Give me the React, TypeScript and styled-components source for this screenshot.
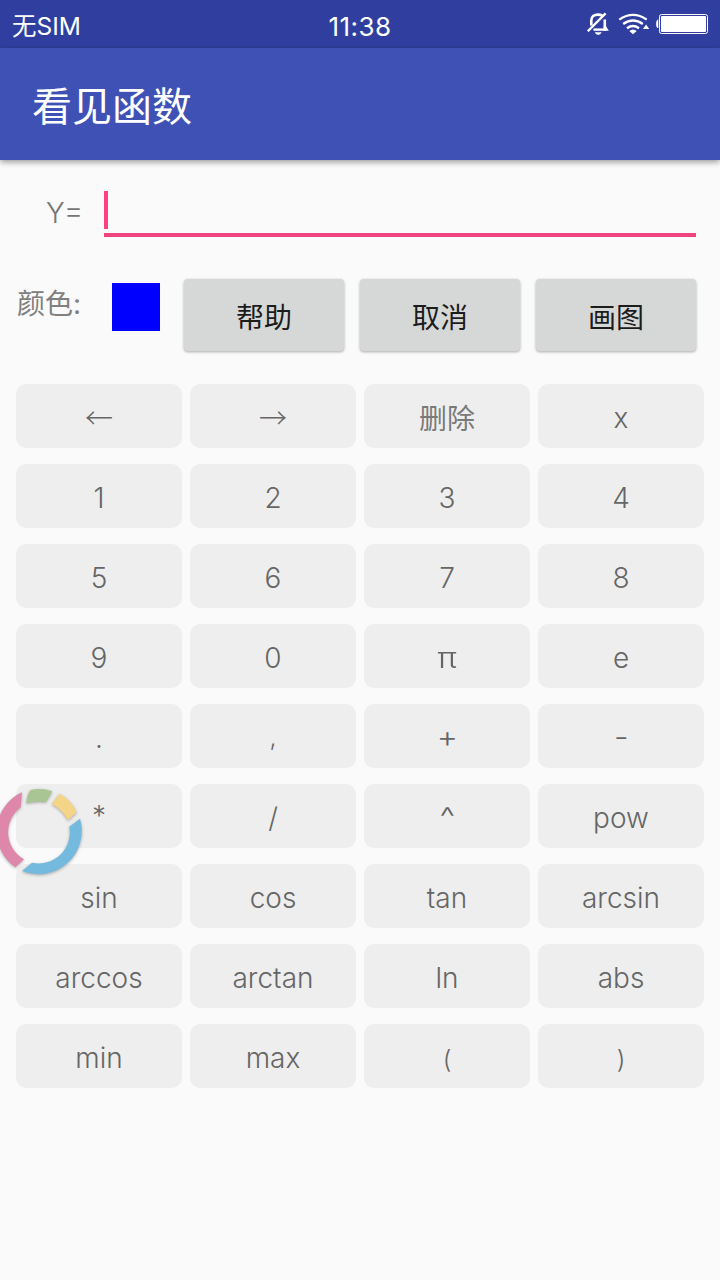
import React from "react";
import styled, { createGlobalStyle } from "styled-components";

const GlobalStyle = createGlobalStyle`
  * { box-sizing: border-box; }
  body {
    margin: 0;
    background: #fafafa;
    font-family: Inter, "Noto Sans CJK SC", sans-serif;
  }
`;

const Screen = styled.main`
  position: relative;
  width: 720px;
  height: 1280px;
  overflow: hidden;
  background: #fafafa;
`;

const StatusBar = styled.header`
  display: grid;
  grid-template-columns: 1fr auto 1fr;
  align-items: center;
  height: 48px;
  padding: 2px 12px 0;
  background: #303f9f;
  color: #fff;
  line-height: 46px;
`;

const Carrier = styled.span`
  font-size: 24.5px;
`;

const Clock = styled.time`
  padding-top: 2px;
  font-size: 26px;
  letter-spacing: 0.4px;
`;

const StatusIcons = styled.svg`
  justify-self: end;
  align-self: start;
  margin: -2px -12px 0 0;
  display: block;
`;

const AppBar = styled.div`
  display: flex;
  align-items: center;
  height: 112px;
  padding: 5px 32px 0;
  background: #3f51b5;
  box-shadow: 0 2px 6px rgba(0, 0, 0, 0.4);
`;

const Title = styled.h1`
  margin: 0;
  color: #fff;
  font-size: 40px;
  font-weight: 400;
  line-height: 57px;
`;

const FormulaRow = styled.div`
  display: flex;
  height: 77px;
  padding: 31px 24px 0 0;
`;

const FormulaLabel = styled.label`
  width: 104px;
  padding-left: 46px;
  color: #757575;
  font-size: 28px;
  font-weight: 300;
  line-height: 42px;
  letter-spacing: -1px;
`;

const EqualsSign = styled.span`
  position: relative;
  top: -2px;
  font-size: 30px;
`;

const FormulaField = styled.div`
  flex: 1;
  height: 46px;
  border-bottom: 4px solid #f04480;
`;

const Caret = styled.div`
  width: 4px;
  height: 38px;
  background: #ff4081;
`;

const ActionRow = styled.div`
  display: flex;
  align-items: flex-start;
  height: 147px;
  padding: 42px 24px 0 17px;
`;

const ColorLabel = styled.span`
  width: 95px;
  padding-top: 1px;
  color: #808080;
  font-size: 28px;
  font-weight: 400;
  line-height: 48px;
`;

const Swatch = styled.div`
  width: 48px;
  height: 48px;
  margin: 4px 24px 0 0;
  background: #0000ff;
`;

const Actions = styled.div`
  display: flex;
  gap: 16px;
`;

const ActionButton = styled.button`
  width: 160px;
  height: 72px;
  padding: 6px 0 0;
  border: 0;
  border-radius: 4px;
  background: #d6d7d7;
  box-shadow: 0 1px 3px rgba(0, 0, 0, 0.32);
  color: #1c1c1c;
  font-family: inherit;
  font-size: 28px;
  line-height: 66px;
`;

const Keypad = styled.div`
  display: grid;
  grid-template-columns: repeat(4, 166px);
  grid-auto-rows: 64px;
  gap: 16px 8px;
  padding: 0 16px;
`;

const Key = styled.button`
  display: flex;
  justify-content: center;
  padding: 4px 0 0;
  border: 0;
  border-radius: 10px;
  background: #eeeeee;
  color: #666666;
  font-family: inherit;
  font-size: 28px;
  font-weight: 300;
  line-height: 60px;
`;

const Glyph = styled.span<{ $size?: number; $lift?: number; $weight?: number; $cjk?: boolean; $stretch?: number; $color?: string }>`
  color: ${(p) => p.$color ?? "inherit"};
  font-family: ${(p) => (p.$cjk ? '"Noto Sans CJK SC", sans-serif' : "inherit")};
  font-size: ${(p) => p.$size ?? 28}px;
  font-weight: ${(p) => p.$weight ?? 300};
  transform: translateY(${(p) => -(p.$lift ?? 0)}px) scaleX(${(p) => p.$stretch ?? 1});
`;

const FloatingRing = styled.svg`
  position: absolute;
  left: 0;
  top: 770px;
  filter: drop-shadow(0 1px 1.5px rgba(0, 0, 0, 0.3));
`;

type KeySpec = {
  label: string;
  size?: number;
  lift?: number;
  weight?: number;
  cjk?: boolean;
  stretch?: number;
  color?: string;
};

const special: Record<string, Omit<KeySpec, "label">> = {
  "←": { cjk: true, lift: 1 },
  "→": { cjk: true, lift: 1 },
  "删除": { cjk: true, weight: 400, lift: 1, color: "#7a7a7a" },
  "π": { stretch: 1.2 },
  ",": { size: 25, lift: 1 },
  "+": { size: 29, lift: 1, stretch: 1.12 },
  "-": { stretch: 1.15, lift: 1 },
  "*": { lift: 2 },
  "^": { stretch: 1.25, lift: 1 },
  "(": { size: 25, lift: -1 },
  ")": { size: 25, lift: -1 },
};

const keys: KeySpec[] = [
  "←", "→", "删除", "x",
  "1", "2", "3", "4",
  "5", "6", "7", "8",
  "9", "0", "π", "e",
  ".", ",", "+", "-",
  "*", "/", "^", "pow",
  "sin", "cos", "tan", "arcsin",
  "arccos", "arctan", "ln", "abs",
  "min", "max", "(", ")",
].map((label) => ({ label, ...special[label] }));

export default function App() {
  return (
    <Screen>
      <GlobalStyle />
      <StatusBar>
        <Carrier>无SIM</Carrier>
        <Clock>11:38</Clock>
        <StatusIcons width="140" height="46" viewBox="580 0 140 46" fill="none">
          {/* muted bell */}
          <path d="M591.3 25.5V20.5C591.3 16.6 594 14.6 598 14.6 600 14.6 601.4 15 602.4 15.6M604.8 19.5V28" stroke="#fff" strokeWidth="2.6" />
          <path d="M593.5 29.6H606" stroke="#fff" strokeWidth="2.4" />
          <path d="M603.6 26H606L608.8 30.8H603.6Z" fill="#fff" />
          <path d="M587.8 31.2 605.6 13.4" stroke="#fff" strokeWidth="2.3" />
          <path d="M594.8 32.2H601.6Q600.6 35 598.2 35T594.8 32.2Z" fill="#fff" />
          {/* wifi */}
          <path d="M619.3 19.6Q633 10.2 646.7 19.6M623.2 24Q633 17 642.8 24M627 28.2Q633 23.8 639 28.2" stroke="#fff" strokeWidth="2.3" />
          <path d="M629.3 31Q633 27.8 636.7 31L633 34.3Z" fill="#fff" />
          <path d="M643 29 646.1 24.5 649.2 29Z" fill="#fff" />
          {/* battery */}
          <path d="M658 19.7Q656.4 20.2 656.4 23.9T658 28Z" fill="#fff" stroke="#fff" strokeWidth="0.6" />
          <rect x="659.5" y="14.5" width="48" height="19" rx="2" stroke="#fff" strokeWidth="1" />
          <rect x="661" y="16" width="45" height="16" rx="0.8" fill="#fff" />
        </StatusIcons>
      </StatusBar>
      <AppBar>
        <Title>看见函数</Title>
      </AppBar>
      <FormulaRow>
        <FormulaLabel>
          Y<EqualsSign>=</EqualsSign>
        </FormulaLabel>
        <FormulaField>
          <Caret />
        </FormulaField>
      </FormulaRow>
      <ActionRow>
        <ColorLabel>颜色:</ColorLabel>
        <Swatch />
        <Actions>
          <ActionButton>帮助</ActionButton>
          <ActionButton>取消</ActionButton>
          <ActionButton>画图</ActionButton>
        </Actions>
      </ActionRow>
      <Keypad>
        {keys.map((k) => (
          <Key key={k.label}>
            <Glyph $size={k.size} $lift={k.lift} $weight={k.weight} $cjk={k.cjk} $stretch={k.stretch} $color={k.color}>
              {k.label}
            </Glyph>
          </Key>
        ))}
      </Keypad>
      <FloatingRing width="90" height="110" viewBox="0 0 270 330">
        <path d="M66 67A130 130 0 0 0 46 292L72 268A93 93 0 0 1 62 112Z" fill="#de87ab" />
        <path d="M79 100Q81 72 92 60Q124 52 157 64L138 96Q110 91 79 100Z" fill="#a8c593" />
        <path d="M178 71Q212 88 230 126L204 151Q188 119 155 102Z" fill="#f4d588" />
        <path d="M240 146A130 130 0 0 1 66 303L96 278A93 93 0 0 0 208 170Z" fill="#74b9de" />
      </FloatingRing>
    </Screen>
  );
}
